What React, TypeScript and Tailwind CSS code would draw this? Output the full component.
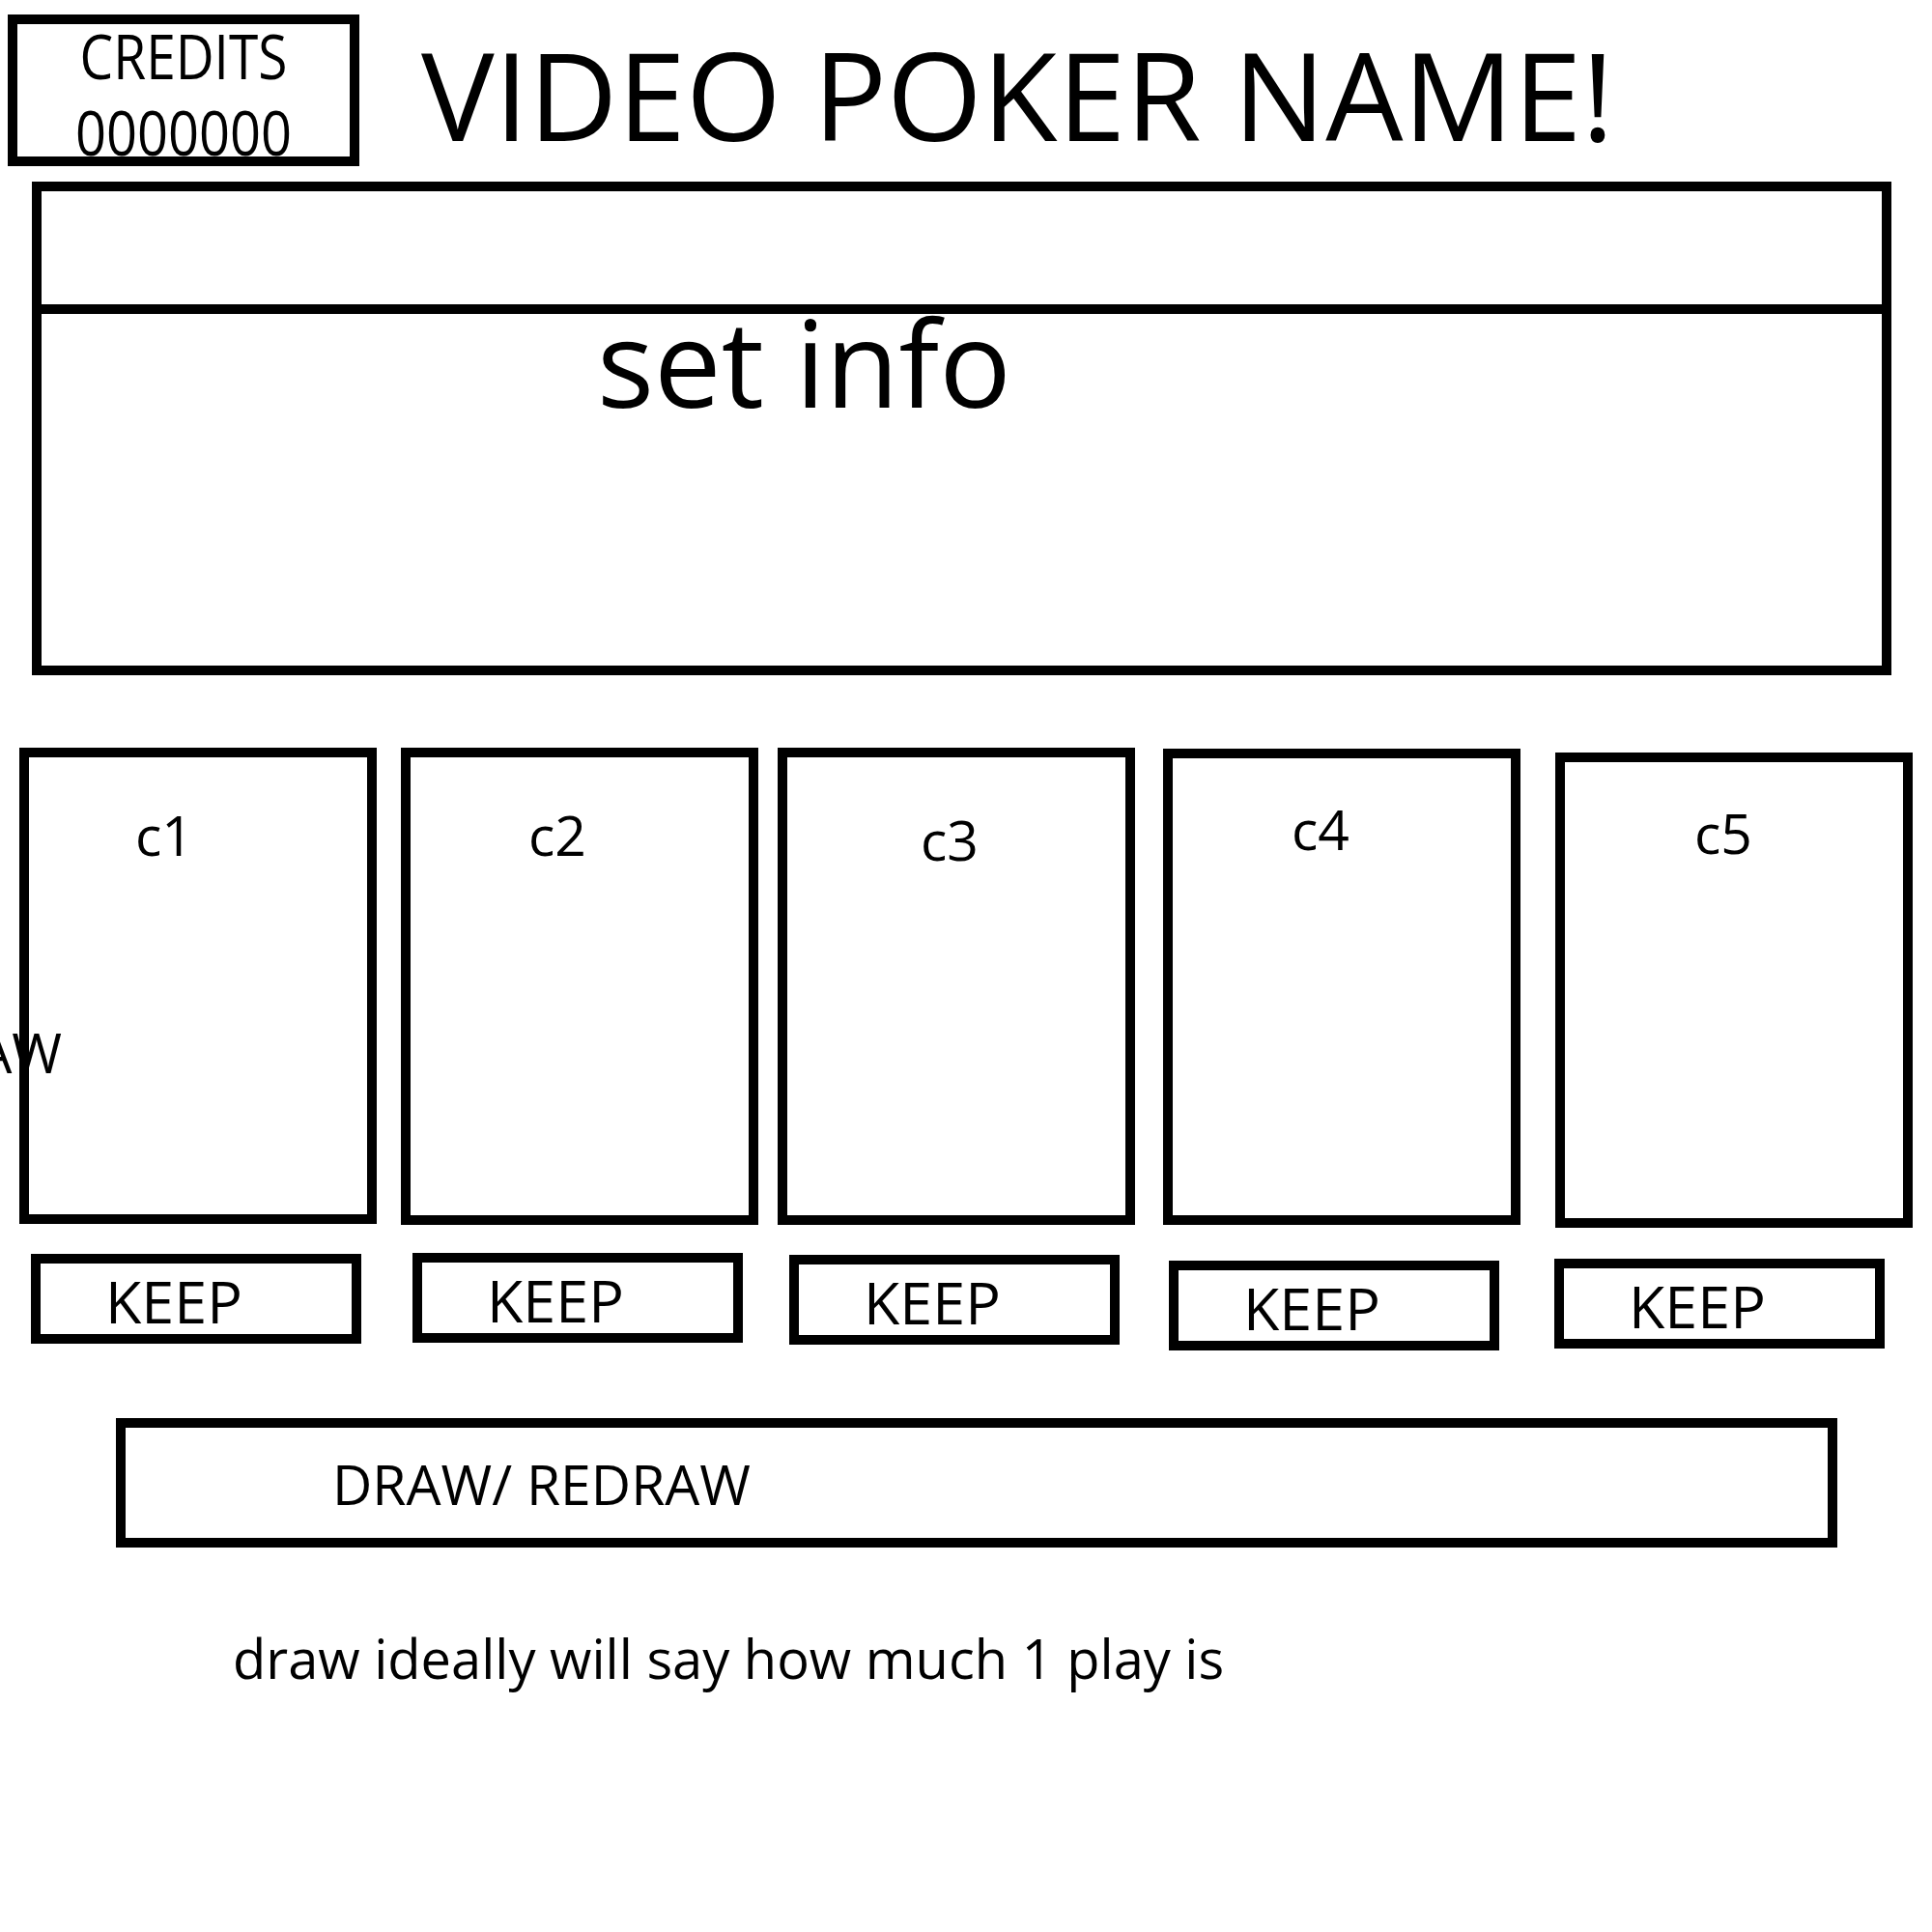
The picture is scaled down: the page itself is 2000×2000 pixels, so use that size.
const cards = [
  { label: "c1", box: "ml-[20px] mt-0 h-[493px]", text: "pl-[110px] pt-[52px]" },
  { label: "c2", box: "ml-[25px] mt-0 h-[494px]", text: "pl-[122px] pt-[52px]" },
  { label: "c3", box: "ml-[20px] mt-0 h-[494px]", text: "pl-[138px] pt-[57px]" },
  { label: "c4", box: "ml-[29px] mt-[1px] h-[493px]", text: "pl-[123px] pt-[45px]" },
  { label: "c5", box: "ml-[36px] mt-[5px] h-[492px]", text: "pl-[134px] pt-[45px]" },
]

const keeps = ["ml-[32px] mt-[1px]", "ml-[53px] mt-0", "ml-[48px] mt-[2px]", "ml-[51px] mt-[8px]", "ml-[57px] mt-[6px]"]

export default function App() {
  return (
    <div className="relative w-[2000px] h-[2000px] overflow-hidden bg-white text-black font-['Open_Sans',sans-serif]">
      {/* header */}
      <div className="flex items-start">
        <div className="ml-[8px] mt-[15px] w-[364px] h-[157px] border-[10px] border-black flex flex-col items-center">
          <span className="inline-block origin-top scale-y-[1.15] mt-[1px] text-[55px] leading-none">CREDITS</span>
          <span className="inline-block origin-top scale-y-[1.15] mt-[22px] text-[56px] leading-none">0000000</span>
        </div>
        <h1 className="ml-[64px] mt-[33px] text-[127px] leading-none whitespace-nowrap">VIDEO POKER NAME!</h1>
      </div>

      {/* set info panel */}
      <div className="ml-[33px] mt-[16px] w-[1925px] h-[511px] border-[10px] border-black">
        <div className="h-[127px] border-b-[10px] border-black" />
        <div className="h-[364px]">
          <p className="ml-[575px] mt-[-13px] text-[124px] leading-none whitespace-nowrap">set info</p>
        </div>
      </div>

      {/* cards */}
      <div className="flex items-start mt-[75px]">
        {cards.map((c) => (
          <div key={c.label} className={`w-[370px] border-[10px] border-black ${c.box}`}>
            <div className={`text-[57px] leading-none ${c.text}`}>{c.label}</div>
          </div>
        ))}
      </div>

      {/* keep buttons */}
      <div className="flex items-start mt-[26px]">
        {keeps.map((k, i) => (
          <div key={i} className={`w-[342px] h-[93px] border-[10px] border-black pl-[67px] pt-[8px] text-[61px] leading-none ${k}`}>
            KEEP
          </div>
        ))}
      </div>

      {/* draw button */}
      <div className="ml-[120px] mt-[70px] w-[1782px] h-[134px] border-[10px] border-black pl-[214px] pt-[30px] text-[57px] leading-none whitespace-nowrap">
        DRAW/ REDRAW
      </div>

      <p className="ml-[241px] mt-[86px] text-[56px] leading-none whitespace-nowrap">draw ideally will say how much 1 play is</p>

      {/* stray label running off the left edge */}
      <span className="absolute top-[1061px] right-[1936px] text-[56px] leading-none whitespace-nowrap">DRAW</span>
    </div>
  )
}
